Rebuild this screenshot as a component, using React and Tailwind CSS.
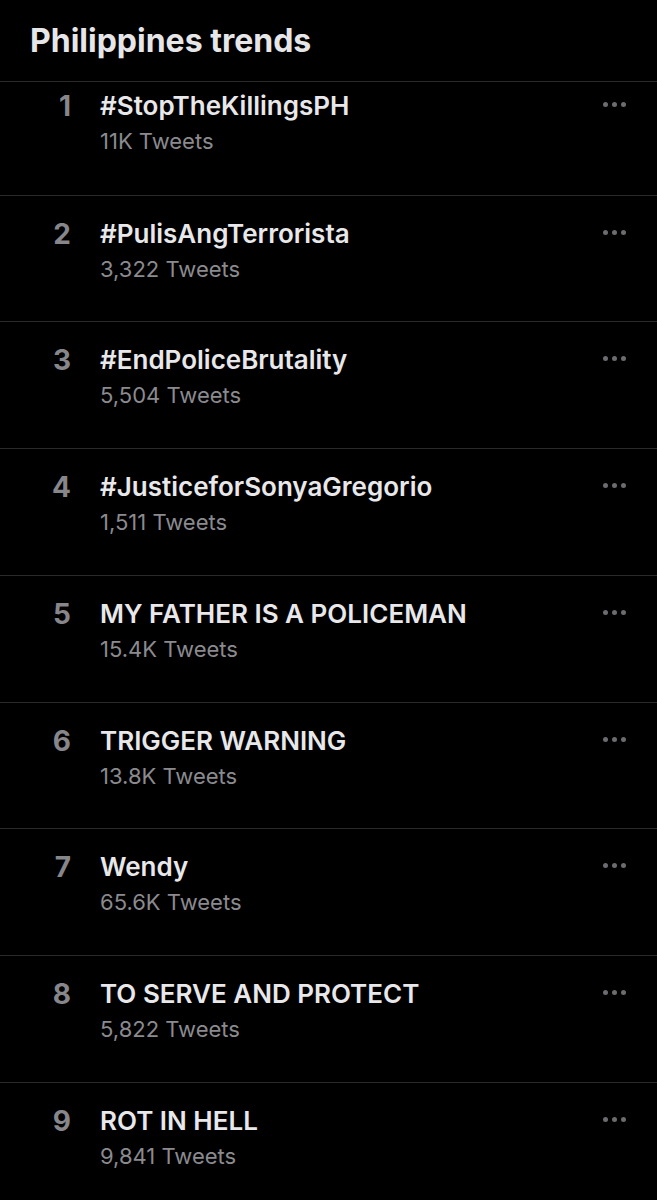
import React from 'react';

const trends = [
  { rank: 1, name: '#StopTheKillingsPH', count: '11K Tweets', h: 'h-[114px] pt-[11px]' },
  { rank: 2, name: '#PulisAngTerrorista', count: '3,322 Tweets', h: 'h-[126px] pt-[25px]' },
  { rank: 3, name: '#EndPoliceBrutality', count: '5,504 Tweets', h: 'h-[127px] pt-[25px]' },
  { rank: 4, name: '#JusticeforSonyaGregorio', count: '1,511 Tweets', h: 'h-[127px] pt-[25px]' },
  { rank: 5, name: 'MY FATHER IS A POLICEMAN', count: '15.4K Tweets', h: 'h-[127px] pt-[25px]' },
  { rank: 6, name: 'TRIGGER WARNING', count: '13.8K Tweets', h: 'h-[126px] pt-[25px]' },
  { rank: 7, name: 'Wendy', count: '65.6K Tweets', h: 'h-[127px] pt-[25px]' },
  { rank: 8, name: 'TO SERVE AND PROTECT', count: '5,822 Tweets', h: 'h-[127px] pt-[25px]' },
  { rank: 9, name: 'ROT IN HELL', count: '9,841 Tweets', h: 'h-[127px] pt-[25px]' },
];

const MoreDots = () => (
  <div className="flex flex-row items-center gap-[4px]">
    <span className="block w-[5px] h-[5px] rounded-full bg-[#6b6b70]" />
    <span className="block w-[5px] h-[5px] rounded-full bg-[#6b6b70]" />
    <span className="block w-[5px] h-[5px] rounded-full bg-[#6b6b70]" />
  </div>
);

const TrendRow = ({ trend }) => {
  return (
    <div className={'flex flex-row items-start border-t border-[#2a2a2d] pr-[31px] ' + trend.h}>
      <div className="w-[100px] flex flex-row justify-end pr-[29px]">
        <span className="text-[28px] leading-[26px] font-bold text-[#86868b]">{trend.rank}</span>
      </div>
      <div className="flex-1 flex flex-col">
        <span className="text-[26px] leading-[26px] font-semibold text-[#e8e8ea]">{trend.name}</span>
        <span className="text-[22px] leading-[24px] text-[#8a8a8f] mt-[10px]">{trend.count}</span>
      </div>
      <div className="pt-[9px]">
        <MoreDots />
      </div>
    </div>
  );
};

export default function App() {
  return (
    <div className="w-[657px] h-[1200px] overflow-hidden bg-black" style={{ fontFamily: 'Inter, "Noto Sans", sans-serif' }}>
      <div className="h-[81px] pl-[30px] pt-[23px]">
        <h1 className="text-[32px] leading-[36px] font-bold text-[#e6e6e8]">Philippines trends</h1>
      </div>
      {trends.map((t) => (
        <TrendRow key={t.rank} trend={t} />
      ))}
    </div>
  );
}
